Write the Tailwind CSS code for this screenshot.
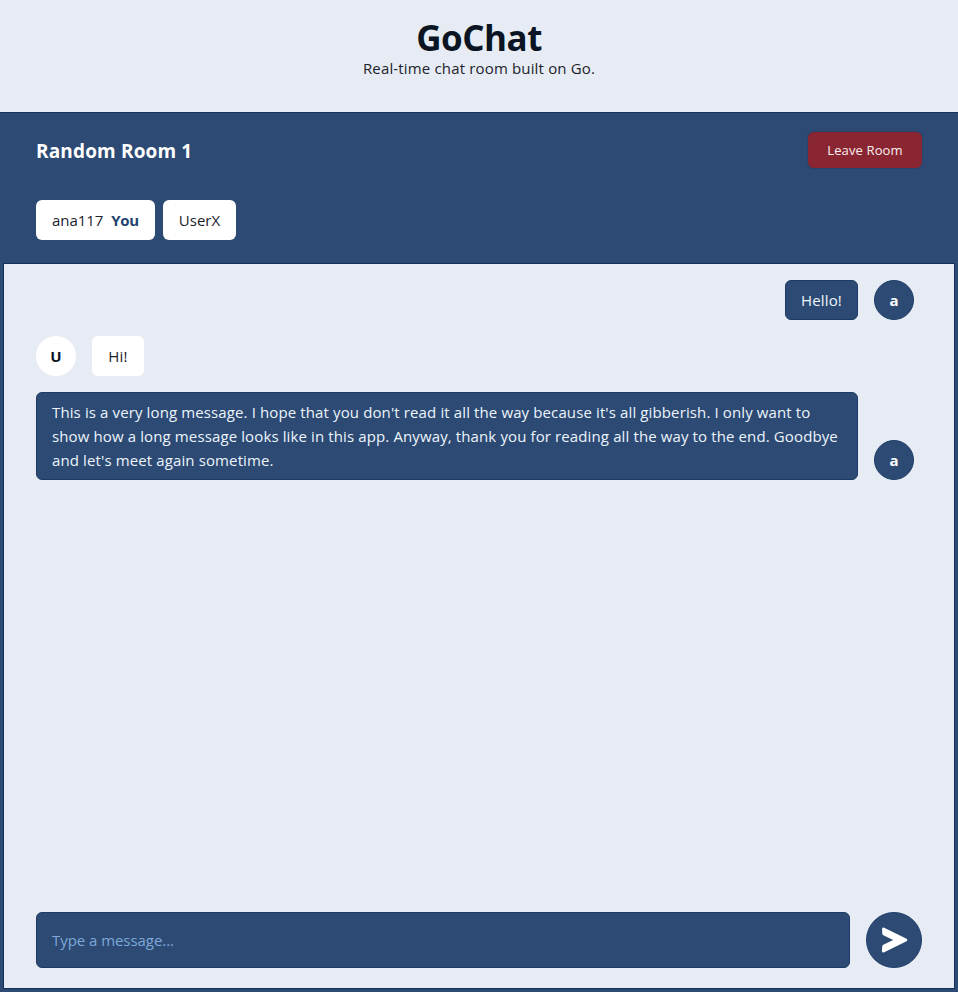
<!DOCTYPE html>
<html lang="en">
<head>
<meta charset="utf-8">
<title>GoChat</title>
<script src="https://cdn.jsdelivr.net/npm/@tailwindcss/browser@4"></script>
</head>
<body class="flex h-screen flex-col overflow-hidden bg-[#e7ecf4] font-['Open_Sans','Noto_Sans',sans-serif] text-[15px] leading-6 text-[#1c222b]">
  <header class="flex h-28 flex-col items-center pt-5">
    <h1 class="text-[35px] leading-9 font-bold tracking-[-0.5px] text-[#0b1422]">GoChat</h1>
    <p class="leading-6 tracking-[0.16px]">Real-time chat room built on Go.</p>
  </header>
  <main class="flex min-h-0 flex-1 flex-col border-t border-[#15315c] bg-[#2c4a73] px-[3px] pb-[3px]">
    <section class="h-[150px] px-[33px] pt-[18px]">
      <div class="flex h-[38px] items-center justify-between">
        <h2 class="pt-0.5 text-[19px] font-bold tracking-[0.15px] text-white">Random Room 1</h2>
        <button class="h-9 w-[114px] rounded-md bg-[#8a2632] pb-px text-[13px] tracking-[0.12px] text-[#fbeef0] ring-1 ring-[#2b4268]">Leave Room</button>
      </div>
      <ul class="mt-[31px] flex gap-2">
        <li class="flex h-10 w-[119px] items-center gap-2 rounded-md bg-white pl-4 whitespace-nowrap"><span class="tracking-[-0.05px]">ana117</span><b class="tracking-[-0.4px] text-[#1f4470]">You</b></li>
        <li class="flex h-10 w-[73px] items-center justify-center rounded-md bg-white">UserX</li>
      </ul>
    </section>
    <section class="flex min-h-0 flex-1 flex-col border border-[#12305b]">
      <div class="flex min-h-0 flex-1 flex-col bg-[#e7ecf4] px-8 pt-4 pb-5">
        <div class="flex flex-1 flex-col gap-4 pr-2">
          <div class="flex items-end justify-end gap-4">
            <p class="flex h-10 w-[73px] items-center justify-center rounded-md border border-[#1b3a66] bg-[#2c4a73] tracking-[0.15px] text-[#edf4fc]">Hello!</p>
            <div class="grid size-10 place-items-center rounded-full border border-[#1f3e6a] bg-[#2c4a73] font-bold text-white">a</div>
          </div>
          <div class="flex items-end gap-4">
            <div class="grid size-10 place-items-center rounded-full bg-white font-bold text-[#0b1422]">U</div>
            <p class="flex h-10 w-[52px] items-center justify-center rounded-md bg-white tracking-[0.2px]">Hi!</p>
          </div>
          <div class="flex items-end gap-4">
            <p class="h-[88px] w-[822px] rounded-md border border-[#1b3a66] bg-[#2c4a73] px-[15px] py-[7px] tracking-[0.12px] whitespace-nowrap text-[#edf4fc]">This is a very long message. I hope that you don't read it all the way because it's all gibberish. I only want to<br>show how a long message looks like in this app. Anyway, thank you for reading all the way to the end. Goodbye<br>and let's meet again sometime.</p>
            <div class="grid size-10 place-items-center rounded-full border border-[#1f3e6a] bg-[#2c4a73] font-bold text-white">a</div>
          </div>
        </div>
        <form class="flex h-14 gap-4">
          <div class="flex flex-1 items-center rounded-md border border-[#1b3a66] bg-[#2c4a73] px-[15px] tracking-[-0.05px] text-[#7ea8d8]">Type a message...</div>
          <button type="button" aria-label="Send" class="size-14 rounded-full border border-[#1f3e6a] bg-[#2c4a73] text-white">
            <svg viewBox="0 0 54 54" class="size-full" fill="currentColor"><path d="M15.1 15.6Q15.4 14 17.2 14.8L39.6 25.7Q41.4 27 39.6 28.3L17.2 39.2Q15.2 40 14.9 38.2L15.2 33.4Q15.4 32 16.8 31.5L26.2 27L16.8 22.5Q15.4 22 15.2 20.6Z"/></svg>
          </button>
        </form>
      </div>
    </section>
  </main>
</body>
</html>
